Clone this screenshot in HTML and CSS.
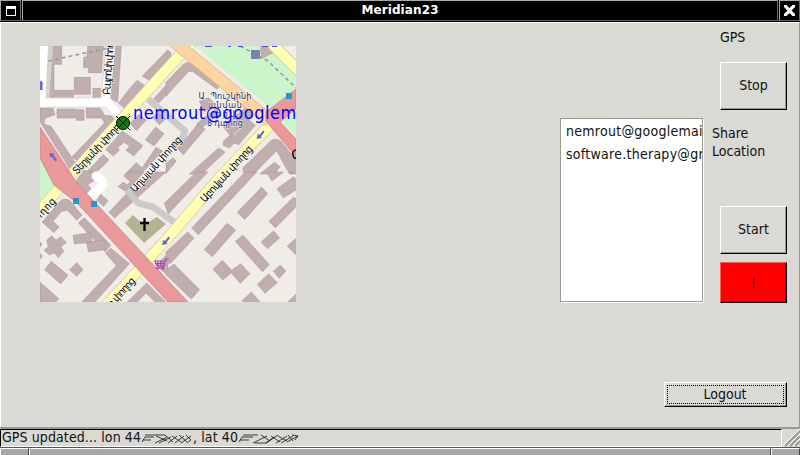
FILE: index.html
```html
<!DOCTYPE html>
<html lang="en">
<head>
<meta charset="utf-8">
<title>Meridian23</title>
<link rel="stylesheet" href="styles.css">
</head>
<body>
<div class="window">
  <header class="titlebar">
    <div class="tb-btn tb-menu"><svg width="10" height="10" viewBox="0 0 10 10" shape-rendering="crispEdges"><path fill="#fff" d="M0 0h10v10H0zM1 3v6h8V3z" fill-rule="evenodd"/></svg></div>
    <div class="tb-title">Meridian23</div>
    <div class="tb-btn tb-close"><svg width="11" height="11" viewBox="0 0 11 11"><path d="M0 0h2.500L5.500 3 8.500 0H11V2L7.500 5.500 11 9v2H8.500L5.500 8 2.500 11H0V9l3.500-3.500L0 2z" fill="#fff"/></svg></div>
  </header>
  <main class="client">
    <div class="content">
      <svg class="map" width="256" height="256" viewBox="40 46 256 256">
        <rect x="40" y="46" width="256" height="256" fill="#f0ede7"/>
        <g transform="translate(166 42) scale(.33333)" fill="#cbf6cb">
          <path d="M75 0L310 195 345 190 390 135V80L320 12z"/>
          <path d="M345 240L392 203V285z"/>
        </g>
        <path d="M40 160H54V180L58 184 40 206z" fill="#cbf6cb"/>
        <g transform="translate(36 42) scale(.33333)" class="building">
          <path d="M38 12H77V67H54V145H112V167H29z"/>
          <path d="M155 12H202L196 92H158V77H143V46H152z"/>
          <path d="M115 106H163V157H115zM171 139H194V167H171z"/>
          <path d="M237 12H256L245 180 225 170z"/>
          <path d="M12 198H50L57 218 28 228 24 246 45 253 118 362 104 385 12 240z"/>
          <path d="M63 201H118V228H63zM121 203H144V235H121zM151 198H192L206 220 226 222 237 235 125 357 108 345 206 242 196 228H151z"/>
          <path d="M319 102L395 24 405 32V70L347 119zM282 138L304 115 328 132 268 201 247 184z"/>
          <path d="M353 170L396 124V154L368 183zM282 244L310 217 330 235 302 266zM350 225L378 205 396 225 370 248zM328 294L359 255 384 275 354 312z"/>
          <path d="M210 323L259 267 321 311 293 342 270 325 281 311 264 301 245 317 250 325 232 342z"/>
          <path d="M145 397L202 338 219 354 175 397zM267 396L301 362 318 378 360 316 380 327 314 396z"/>
        </g>
        <g transform="translate(166 42) scale(.33333)" class="building">
          <path d="M0 121L53 66Q72 55 88 66L165 123 153 142 79 88 68 88 0 163z"/>
          <path d="M284 12H325V30L286 50z" stroke="none"/>
          <path d="M100 178L128 167 146 185 116 210zM130 215L150 200 160 213 105 260 92 245z"/>
          <path d="M172 255L240 195 262 222 195 283z"/>
          <path d="M35 320L96 245 117 262 52 338zM0 365L20 348 31 357 0 395zM70 396L158 318 177 330 108 396zM172 298L197 275 205 280 250 235 268 250 218 308 205 303 190 318 172 310z"/>
          <path d="M230 378L315 296Q330 287 345 298L396 360V396H370L332 326 263 396H235zM282 396L325 361 342 374 325 396z"/>
        </g>
        <g transform="translate(36 172) scale(.33333)" class="building">
          <path d="M119 28L145 -5 170 0 175 25 155 38 165 50 151 64zM182 84L195 67 216 86 203 103z"/>
          <path d="M263 12L280 0H390L236 138 219 121 282 54 273 61 247 44 260 31 274 38 283 29z"/>
          <path d="M19 150L70 90Q85 75 102 86L138 130 122 145 95 115 77 118 51 148 69 165 53 182zM127 153L145 137 225 220 207 238zM208 242L225 229 280 275 176 391H136L241 281z"/>
          <path d="M111 190L164 182 168 211 115 216zM152 210L207 204 211 233 157 239z"/>
          <path d="M32 205L46 191 60 204 75 194 91 212 74 225 84 238 67 257 54 242 40 249 24 235 37 224z"/>
          <path d="M26 293L46 268 96 310 74 336zM101 293L122 272 141 293 122 313zM12 330L69 381 58 391H12zM12 210L18 217 12 225zM12 245L19 252 12 262zM273 391L332 333 390 391H358L330 363 303 391zM375 265L396 245V310L365 285z"/>
        </g>
        <g transform="translate(166 172) scale(.33333)" class="building">
          <path d="M-5 94L91 0H126L7 125zM77 168L237 0H272L97 188zM214 121L287 45 305 65 236 143zM303 4L307 0H353L318 27zM333 50L383 14 392 22V53L352 77zM309 148L383 75 392 82V103L328 168z"/>
          <path d="M115 233L183 154 209 174 139 254zM208 208L231 189 310 278 289 299zM285 210L323 177 341 198 304 230zM364 222L392 198V251zM0 240L65 180 84 199 12 276 0 263z"/>
          <path d="M141 292L169 265 197 295 224 275 252 305 223 334 196 303 170 324zM274 337L308 305 334 332 297 364zM322 298L343 279 360 297 340 319zM0 295L24 276 101 353 76 381 0 308zM228 386L256 360 284 391H232zM364 391L392 365V391zM372 0H380L375 4z"/>
        </g>
        <g fill="none" stroke-linejoin="round">
          <path d="M40 46H48L44 104M40 102.500H108M110 46L105 102M107 101L123 121" stroke="#d7d2cf" stroke-width="10"/>
          <path d="M40 102.500H108M111 46L105 102M107 101L123 121" stroke="#fff" stroke-width="8.500"/>
          <path d="M40 46H48L45 107H40z" fill="#fff"/>
          <path d="M181 138L133 190" stroke="#d7d2cf" stroke-width="7.500"/>
          <path d="M181 138L133 190" stroke="#fff" stroke-width="6.500"/>
          <path d="M148 99L185 131Q183 140 174 146M127 190L138 203 153 207 174 222" stroke="#cacaca" stroke-width="6.500"/>
          <path d="M90 197L101 187Q105 183 101 180L96 176" stroke="#fff" stroke-width="9" stroke-linecap="round"/>
          <path d="M194 40L168 68 74 172 40 210M269 126L221 176 166 240 105 307M272 44L300 72" stroke="#d2cda8" stroke-width="11.500"/>
          <path d="M194 40L168 68 74 172 40 210M269 126L221 176 166 240 105 307M272 44L300 72" stroke="#ffffb4" stroke-width="10"/>
          <path d="M168 36L184 50 222 81 270 121" stroke="#dcb982" stroke-width="12.500"/>
          <path d="M168 36L184 50 222 81 270 121" stroke="#ffd3a2" stroke-width="11"/>
        </g>
        <path d="M40 127L70 172 76 182 188 302H168L78 204 54 185 40 158z" fill="#eb989b" stroke="#c18084" stroke-width=".7"/>
        <path d="M296 89L266 112V121L296 157V139L280 122 296 109z" fill="#eb989b" stroke="#c18084" stroke-width=".7"/>
        <g fill="none" stroke="#999" stroke-width="1.500" stroke-dasharray="4 3"><path d="M48 61L85 53 109 48M240 46L268 61 296 88" /></g>
        <path d="M125 223L133 215 144 225 157 217 166 224 144 243z" fill="#b4b290"/>
        <path d="M144.500 218v13M140 223h9" stroke="#000" stroke-width="2.300"/>
        <path d="M251 50h9v9h-9z" fill="#7a80b2"/>
        <path d="M286 93h6v6h-6zM73 198h6v6h-6zM91 201h6v6h-6z" fill="#2398cf"/>
        <g fill="#6268d5">
          <path d="M40 90V84H39L41 80 43.500 84H42.500V90zM49.500 153L54 153.500 53.500 155 57 160 55.500 161.500 51.500 156.500 50 157.500zM256.500 139L258 133.500 259.500 135 263 130.500 264.500 132 261 136.500 262 138zM162 245L163.500 239.500 165 241 168.500 236.500 170 238 166.500 242.500 167.500 244z"/>
        </g>
        <path d="M205 46h7M228 46h3M238 46h5M262 46h6M272 46h5" stroke="#544edb" stroke-width="2"/>
        <path d="M169 259h-3l-3 9h-7M166 261h-11l2 5h8M158 261v5M161 261v5M155 263.500h10" fill="none" stroke="#b23bb2" stroke-width="1.200"/>
        <path d="M156.500 268.500h2M162 268.500h2" stroke="#b23bb2" stroke-width="2"/>
        <path d="M297 150Q292 150 293 155T297 157" fill="none" stroke="#111" stroke-width="1.500"/>
        <g class="street">
          <text transform="translate(110 95) rotate(-86)" textLength="62">Բայրոնի փողոց</text>
          <text transform="translate(77 175) rotate(-47)" textLength="70">Տերյանի փողոց</text>
          <text transform="translate(135 193) rotate(-48)" textLength="71">Աղայան փողոց</text>
          <text transform="translate(205 203) rotate(-48)" textLength="72">Աբովյան փողոց</text>
          <text transform="translate(39 221) rotate(-48)" textLength="26">ողոց</text>
          <text transform="translate(112 308) rotate(-48)" textLength="36">ի փողոց</text>
        </g>
        <g class="school">
          <text x="225" y="99" textLength="53">Ա. Պուշկինի</text>
          <text x="225" y="108" textLength="34">անվան</text>
          <text x="225" y="117" textLength="20">թիվ</text>
          <text x="225" y="126" textLength="36">8 դպրոց</text>
        </g>
        <circle cx="123" cy="123" r="6.500" fill="#078407" stroke="#000"/>
        <path d="M116 116L130 130M130 116L116 130" stroke="#000" stroke-width="1"/>
        <text class="contact" x="133" y="119">nemrout@googlem</text>
      </svg>
      <div class="list"><div>nemrout@googlemail.com</div><div>software.therapy@gmail.com</div></div>
      <div class="side">
        <div class="label gps">GPS</div>
        <button class="stop">Stop</button>
        <div class="label share">Share<br>Location</div>
        <button class="start">Start</button>
        <button class="alert">!</button>
      </div>
    </div>
    <div class="actions"><button class="logout">Logout</button></div>
  </main>
  <footer class="status">
    <div class="status-text"><span>GPS updated... lon 44</span><svg class="scribble" width="52" height="16" viewBox="0 0 52 16"><path d="M1 13l3-5h9M2 11h8M4 6h20M14 14l12-6M15 7l11 5M18 14l12-6M24 6l8 7M27 14l9-7M31 7l9 6M34 14l9-7M38 6l8 7M40 14l10-7M45 6l5 5-4 3"/></svg><span>, lat 40</span><svg class="scribble" width="63" height="16" viewBox="0 0 63 16"><path d="M1 13l3-5h11M2 11h9M5 6h15M15 14l14-7M17 14h11l8-6M23 6l9 6M28 14l12-8M33 7l9 6M38 14l11-7M40 7l9 5M43 14l12-7M50 6l5 6M49 13l11-6M54 6l6 1-3 4"/></svg></div>
    <svg class="grip" width="17" height="18" viewBox="0 0 17 18"><path d="M2 17L17 2M7 17L17 7M12 17L17 12" stroke="#9c998f" stroke-width="2.200"/><path d="M0 17L17 0M5 17L17 5M10 17L17 10" stroke="#fff" stroke-width="1"/></svg>
  </footer>
  <div class="frame"><i class="corner"></i><i class="middle"></i><i class="corner end"></i></div>
</div>
</body>
</html>
```
FILE: styles.css
```css
* { box-sizing: border-box; }
body { margin: 0; background: #dad9d4; overflow: hidden; }
.window {
  width: 800px; height: 455px;
  display: grid; grid-template-rows: 22px 405px 20px 8px;
  font: 14px/18px "DejaVu Sans Condensed", "DejaVu Sans", sans-serif;
  font-stretch: condensed;
  color: #111;
}
.titlebar { display: flex; gap: 1px; background: #000; border-bottom: 1px solid #000; }
.titlebar > div { border: 1px solid #666; border-top-color: #aaa; border-left-color: #aaa; }
.tb-btn { width: 21px; display: flex; align-items: center; justify-content: center; }
.tb-title {
  flex: 1; text-align: center; color: #fff;
  font: bold 12px/19px "DejaVu Sans", sans-serif; letter-spacing: .1px;
}
.client {
  background: #dad9d4;
  border-top: 1px solid #fff; border-left: 1px solid #fff; border-right: 1px solid #9c998f;
}
.content { display: flex; align-items: flex-start; height: 359px; padding-left: 39px; }
.map { display: block; margin-top: 23px; flex: none; }
.list {
  margin: 95px 0 0 264px; width: 144px; height: 185px; flex: none;
  background: #fff; border: 1px solid #9c998f; border-right: 1px solid #fff; border-bottom-color: #fff;
  box-shadow: inset -1px -1px #9c998f;
  overflow: hidden; padding: 2px 5px; white-space: nowrap; letter-spacing: .27px;
}
.list div { height: 23px; line-height: 21px; width: 136px; overflow: hidden; }
.side { padding-left: 8px; }
.label { line-height: 18px; }
.gps { margin: 5px 0 16px 8px; }
.share { margin-top: 14px; height: 82px; }
button {
  display: block; margin: 0 0 0 8px; padding: 0 0 2px; width: 67px; height: 48px;
  font: inherit; color: #111; background: #dad9d4;
  border: 1px solid; border-color: #fff #000 #000 #fff;
  box-shadow: inset -1px -1px #9c998f;
}
.start { margin-bottom: 8px; }
.alert {
  height: 41px; background: #f00; color: #500; padding: 0;
  border-color: #ff5a50 #000 #000 #ff5a50; box-shadow: inset -1px -1px #a00;
}
.actions { display: flex; justify-content: flex-end; padding-right: 12px; }
.logout { width: 123px; height: 25px; margin: 0; padding: 0 1px 2px 0; outline: 1px dotted #000; outline-offset: -4px; }
.status { display: flex; background: #dad9d4; border-top: 2px solid #9c998f; }
.status-text {
  width: 782px; display: flex; align-items: center; white-space: pre;
  border: 1px solid #000; border-bottom-color: #fff; border-right-color: #fff;
  padding: 0 0 2px 1px; letter-spacing: .1px;
}
.scribble { fill: none; stroke: #111; stroke-width: .8; flex: none; }
.grip { margin-left: 1px; }
.frame { display: flex; border-top: 1px solid #555; }
.frame i { background: #a8a8a8; border-top: 1px solid #fff; border-left: 1px solid #fff; border-right: 1px solid #444; }
.corner { width: 29px; }
.middle { flex: 1; }
.building path { fill: #c1afae; stroke: #a58da6; stroke-width: 2; stroke-dasharray: 3 1; }
.street text {
  font: 10.500px "DejaVu Sans Condensed", "DejaVu Sans", sans-serif; fill: #000;
  stroke: #fff; stroke-width: 1px; paint-order: stroke;
}
.school text {
  font: 9px "DejaVu Sans Condensed", "DejaVu Sans", sans-serif; fill: #202555; text-anchor: middle;
  stroke: #fff; stroke-width: .8px; paint-order: stroke;
}
.contact { font: 18px "DejaVu Sans Condensed", "DejaVu Sans", sans-serif; fill: #00f; letter-spacing: .55px; }
```
